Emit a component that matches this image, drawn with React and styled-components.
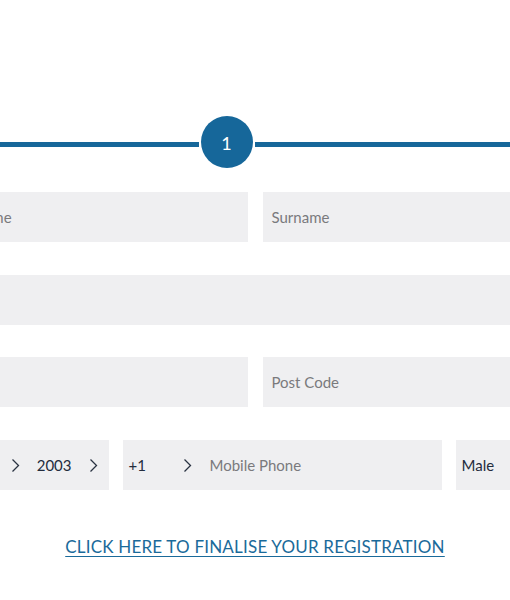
import React from "react";
import styled, { createGlobalStyle } from "styled-components";

const GlobalStyle = createGlobalStyle`
  html, body {
    margin: 0;
    padding: 0;
    background: #ffffff;
    overflow: hidden;
  }
  body {
    font-family: "Lato", "Noto Sans", sans-serif;
  }
`;

const Page = styled.div`
  width: 510px;
  height: 600px;
  display: flex;
  justify-content: center;
  overflow: hidden;
`;

const Form = styled.div`
  width: 649px;
  flex-shrink: 0;
  padding-top: 116px;
  display: flex;
  flex-direction: column;
`;

const Stepper = styled.div`
  display: grid;
  grid-template-columns: 268px 52px 1fr;
  column-gap: 2px;
  height: 52px;
  margin-right: -200px;
`;

const Line = styled.div`
  height: 5px;
  margin-top: 26px;
  background: #16679a;
`;

const Step = styled.div`
  width: 52px;
  height: 52px;
  border-radius: 50%;
  background: #16679a;
  color: #ffffff;
  font-size: 18px;
  font-weight: 400;
  display: flex;
  align-items: center;
  justify-content: center;
  padding-top: 1px;
  box-sizing: border-box;
`;

const Fields = styled.div`
  margin-top: 24px;
  display: flex;
  flex-direction: column;
`;

const Row = styled.div`
  display: grid;
  grid-template-columns: ${(p) => p.$cols || "1fr 1fr"};
  column-gap: ${(p) => p.$gap || "15px"};
  margin-top: ${(p) => p.$mt || "0"};
`;

const Field = styled.div`
  height: 50px;
  background: #efeff1;
  display: flex;
  align-items: center;
  padding: 0 ${(p) => p.$pad || "9px"};
  box-sizing: border-box;
  font-size: 15px;
  color: ${(p) => (p.$value ? "#232c3d" : "#7a7a7d")};
  justify-content: ${(p) => (p.$end ? "flex-end" : "flex-start")};
  overflow: hidden;
  white-space: nowrap;
`;

const Segment = styled.div`
  display: flex;
  align-items: center;
  gap: 17px;
  margin-left: ${(p) => p.$ml || "17px"};
  width: ${(p) => p.$w || "auto"};
  color: ${(p) => (p.$muted ? "#7a7a7d" : "#232c3d")};
`;

const Code = styled.span`
  width: 37px;
`;

const Link = styled.a`
  display: block;
  margin-top: 46px;
  text-align: center;
  color: #1a6a9a;
  font-size: 17px;
  text-decoration: underline;
  text-underline-offset: 3px;
  letter-spacing: 0.2px;
  cursor: pointer;
`;

const Chevron = () => (
  <svg width="9" height="15" viewBox="0 0 9 15" fill="none">
    <path d="M1.5 1.5 L7.5 7.5 L1.5 13.5" stroke="#2a3342" strokeWidth="1.3" />
  </svg>
);

const App = () => {
  return (
    <>
      <GlobalStyle />
      <Page>
        <Form>
          <Stepper>
            <Line />
            <Step>1</Step>
            <Line />
          </Stepper>
          <Fields>
            <Row>
              <Field>First Name</Field>
              <Field>Surname</Field>
            </Row>
            <Row $cols="1fr" $mt="33px">
              <Field>Email</Field>
            </Row>
            <Row $mt="32px">
              <Field>City</Field>
              <Field>Post Code</Field>
            </Row>
            <Row $cols="178px 319px 1fr" $gap="14px" $mt="33px">
              <Field $value $end $pad="11px">
                <Segment $ml="0">
                  12 <Chevron />
                </Segment>
                <Segment>
                  May <Chevron />
                </Segment>
                <Segment>
                  2003 <Chevron />
                </Segment>
              </Field>
              <Field $value $pad="6px">
                <Segment $ml="0" $w="68px">
                  <Code>+1</Code>
                  <Chevron />
                </Segment>
                <Segment $ml="13px" $muted>
                  Mobile Phone
                </Segment>
              </Field>
              <Field $value $pad="6px">
                Male
              </Field>
            </Row>
          </Fields>
          <Link>CLICK HERE TO FINALISE YOUR REGISTRATION</Link>
        </Form>
      </Page>
    </>
  );
};

export default App;
